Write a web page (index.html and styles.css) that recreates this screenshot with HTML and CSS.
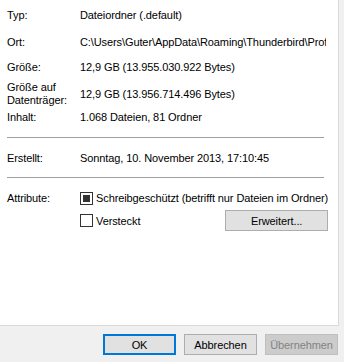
FILE: index.html
```html
<!DOCTYPE html>
<html lang="de">
<head>
    <meta charset="UTF-8">
    <meta name="viewport" content="width=device-width, initial-scale=1.0">
    <title>Eigenschaften</title>
    <link rel="stylesheet" href="styles.css">
</head>
<body>
    <div class="dialog">
        <div class="tab-page">
            <div class="row row-typ">
                <div class="label">Typ:</div>
                <div class="value">Dateiordner (.default)</div>
            </div>
            <div class="row row-ort">
                <div class="label">Ort:</div>
                <div class="value clip">C:\Users\Guter\AppData\Roaming\Thunderbird\Profiles</div>
            </div>
            <div class="row row-size">
                <div class="label">Größe:</div>
                <div class="value">12,9 GB (13.955.030.922 Bytes)</div>
            </div>
            <div class="row row-disk">
                <div class="label">Größe auf Datenträger:</div>
                <div class="value">12,9 GB (13.956.714.496 Bytes)</div>
            </div>
            <div class="row row-content">
                <div class="label">Inhalt:</div>
                <div class="value">1.068 Dateien, 81 Ordner</div>
            </div>

            <div class="separator"></div>

            <div class="row row-created">
                <div class="label">Erstellt:</div>
                <div class="value">Sonntag, 10. November 2013, 17:10:45</div>
            </div>

            <div class="separator"></div>

            <div class="row row-attr">
                <div class="label">Attribute:</div>
                <div class="attr-list">
                    <label class="check">
                        <span class="box mixed"></span>
                        <span>Schreibgeschützt (betrifft nur Dateien im Ordner)</span>
                    </label>
                    <div class="attr-line">
                        <label class="check">
                            <span class="box"></span>
                            <span>Versteckt</span>
                        </label>
                        <button class="btn btn-wide">Erweitert...</button>
                    </div>
                </div>
            </div>
        </div>

        <div class="button-bar">
            <button class="btn btn-default">OK</button>
            <button class="btn">Abbrechen</button>
            <button class="btn" disabled>Übernehmen</button>
        </div>
    </div>
</body>
</html>
```

FILE: styles.css
```css
body {
    margin: 0;
    font-family: "Liberation Sans", Arial, sans-serif;
    font-size: 11px;
    letter-spacing: -0.1px;
    color: #000;
    background-color: #f0f0f0;
}

.dialog {
    width: 344px;
    height: 362px;
    display: flex;
    flex-direction: column;
}

.tab-page {
    width: 339px;
    height: 326px;
    background-color: #fff;
    border-right: 1px solid #d9d9d9;
    border-bottom: 1px solid #d9d9d9;
    padding-top: 8px;
    box-sizing: border-box;
}

.row {
    display: grid;
    grid-template-columns: 73px 1fr;
    padding-left: 7px;
    line-height: 14px;
}

.row .value {
    align-self: center;
    white-space: nowrap;
}

.clip {
    width: 246px;
    overflow: hidden;
}

.row-typ { margin-bottom: 13px; }
.row-ort { margin-bottom: 11px; }
.row-size { margin-bottom: 6px; }
.row-disk { margin-bottom: 3px; }
.row-disk .label { line-height: 13px; padding-top: 1px; }

.separator {
    height: 1px;
    background-color: #a0a0a0;
    margin: 13px 14px 13px 7px;
}

.row-created + .separator {
    margin-top: 12px;
}

.row-attr .label {
    align-self: start;
}

.attr-list {
    display: flex;
    flex-direction: column;
    gap: 8px;
    padding-right: 16px;
}

.attr-line {
    display: flex;
    justify-content: space-between;
    align-items: center;
    margin-top: -3px;
}

.check {
    display: flex;
    align-items: center;
    gap: 3px;
    white-space: nowrap;
}

.box {
    width: 13px;
    height: 13px;
    box-sizing: border-box;
    border: 1px solid #333;
    background-color: #fff;
    display: flex;
    align-items: center;
    justify-content: center;
}

.box.mixed::after {
    content: "";
    width: 7px;
    height: 7px;
    background-color: #333;
}

.btn {
    font-family: inherit;
    font-size: 11px;
    letter-spacing: -0.1px;
    height: 21px;
    width: 73px;
    padding: 0;
    background-color: #e1e1e1;
    border: 1px solid #adadad;
    color: #000;
}

.btn-wide {
    width: 103px;
}

.btn-default {
    border: 2px solid #0078d7;
}

.btn:disabled {
    background-color: #cccccc;
    border-color: #bfbfbf;
    color: #838383;
}

.button-bar {
    display: flex;
    justify-content: flex-end;
    gap: 8px;
    padding: 8px 6px 0 0;
}
```
